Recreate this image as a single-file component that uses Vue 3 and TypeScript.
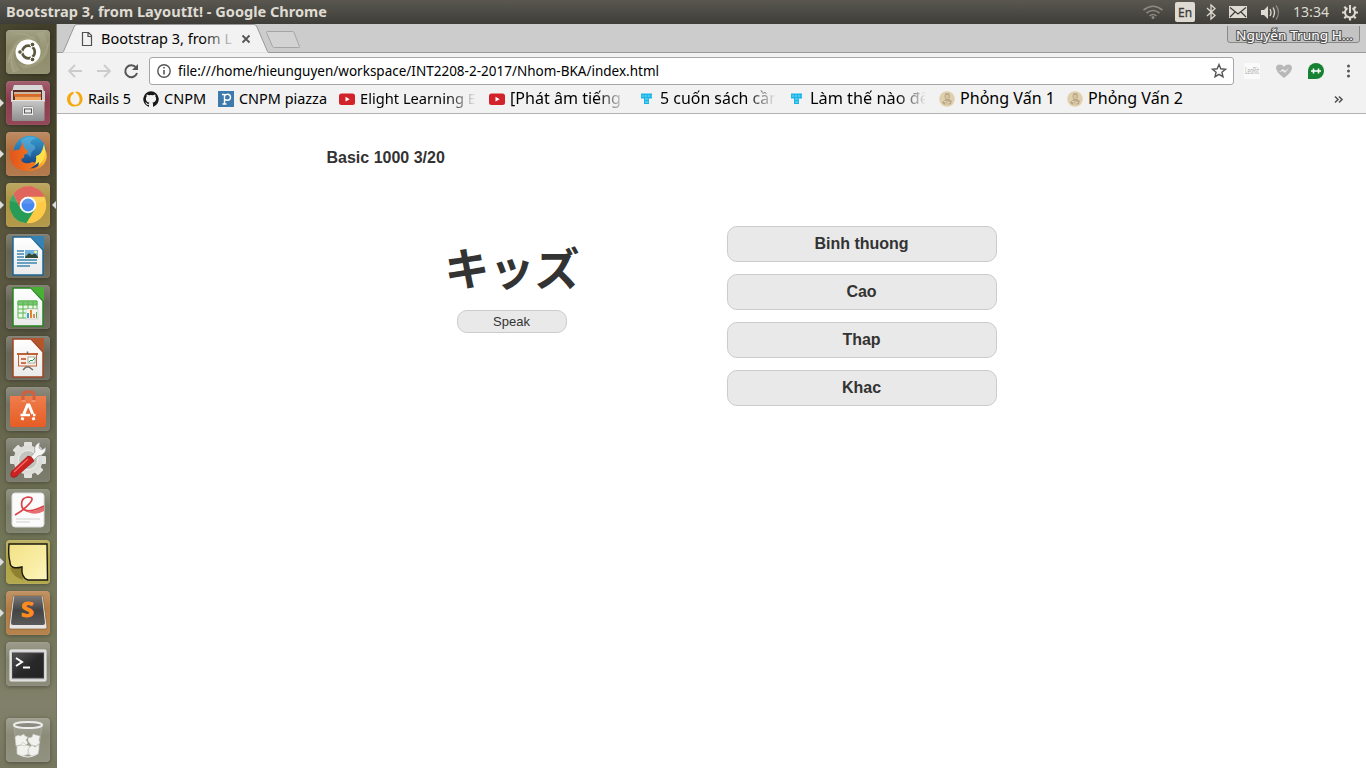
<script setup lang="ts">
interface Bookmark { icon: string; label: string; width: number; textWidth: number; size: number; fade?: boolean }
interface Tile { icon: string; bg: string; running?: boolean; active?: boolean }

const tiles: Tile[] = [
  { icon: 'dash', bg: '#8d8b69' },
  { icon: 'files', bg: '#8c3c4d', running: true },
  { icon: 'firefox', bg: '#ae7242', running: true },
  { icon: 'chrome', bg: '#ae9340', running: true, active: true },
  { icon: 'writer', bg: '#656353' },
  { icon: 'calc', bg: '#656353' },
  { icon: 'impress', bg: '#676556' },
  { icon: 'software', bg: '#737262' },
  { icon: 'settings', bg: '#747565' },
  { icon: 'reader', bg: '#797c66' },
  { icon: 'notes', bg: '#b0a344', running: true },
  { icon: 'sublime', bg: '#b27b42', running: true },
  { icon: 'terminal', bg: '#858572' },
  { icon: 'trash', bg: '#8b8b78' }
]

const bookmarks: Bookmark[] = [
  { icon: 'rails', label: 'Rails 5', width: 76, textWidth: 43, size: 14 },
  { icon: 'github', label: 'CNPM', width: 75, textWidth: 42, size: 14 },
  { icon: 'piazza', label: 'CNPM piazza', width: 121, textWidth: 88, size: 14 },
  { icon: 'youtube', label: 'Elight Learning E', width: 150, textWidth: 116, size: 14, fade: true },
  { icon: 'youtube', label: '[Phát âm tiếng', width: 150, textWidth: 111, size: 16, fade: true },
  { icon: 'tt', label: '5 cuốn sách cần', width: 150, textWidth: 119, size: 16, fade: true },
  { icon: 'tt', label: 'Làm thế nào để', width: 150, textWidth: 119, size: 16, fade: true },
  { icon: 'face', label: 'Phỏng Vấn 1', width: 128, textWidth: 95, size: 16 },
  { icon: 'face', label: 'Phỏng Vấn 2', width: 128, textWidth: 95, size: 16 }
]

const answers: string[] = ['Binh thuong', 'Cao', 'Thap', 'Khac']
const teeth: number[] = [0, 45, 90, 135]
</script>

<template>
  <div class="desktop">
    <header class="panel">
      <svg class="panel-title" width="340" height="24"><text x="6" y="17" textLength="321" lengthAdjust="spacingAndGlyphs">Bootstrap 3, from LayoutIt! - Google Chrome</text></svg>
      <svg class="tray" width="226" height="24" viewBox="0 0 226 24">
        <g fill="none" stroke="#8b8880" stroke-width="1.6">
          <path d="M3.5 10 Q13 2.500 22.500 10M6.500 13 Q13 8 19.500 13M9.500 16 Q13 13 16.500 16" />
        </g>
        <circle cx="13" cy="17.500" r="1.500" fill="#8b8880" />
        <rect x="35" y="2" width="20" height="20" rx="2" fill="#dfdbd2" />
        <text x="38" y="17" font-size="13" textLength="14" lengthAdjust="spacingAndGlyphs" fill="#3c3b37" stroke="#3c3b37" stroke-width=".3">En</text>
        <path d="M67 8 75 15.500 71 19V5l4 3.500-8 7.500" fill="none" stroke="#dfdbd2" stroke-width="1.300" />
        <rect x="89" y="6" width="18" height="12" fill="#dfdbd2" />
        <path d="M90 7.500 98 14l8-6.500M90 17l5-5m11 5-5-5" fill="none" stroke="#3c3b37" stroke-width="1.200" />
        <path d="M121 10h3l4-4v13l-4-4h-3z" fill="#dfdbd2" />
        <path d="M130 9q2 3.500 0 7M133 7.500q3 5 0 10" fill="none" stroke="#dfdbd2" stroke-width="1.300" />
        <path d="M136 5.500q5 7 0 14" fill="none" stroke="#8b8880" stroke-width="1.300" />
        <text x="153" y="17" font-size="14" textLength="36" lengthAdjust="spacingAndGlyphs" fill="#dfdbd2">13:34</text>
        <g transform="translate(210 12.500)" stroke="#dfdbd2" fill="none">
          <path d="M-2.500-4.300A5 5 0 1 0 2.500-4.300" stroke-width="2" />
          <path d="M0-7.500v8" stroke-width="2" />
          <path d="M-4-4-5.700-5.700M4-4l1.700-1.700M-5 0h-3M5 0h3M-4 4-5.700 5.700M4 4l1.700 1.700M0 5v3" stroke-width="2.200" />
        </g>
      </svg>
    </header>

    <div class="workspace">
      <aside class="launcher">
        <div v-for="t in tiles" :key="t.icon" class="slot" :class="{ bottom: t.icon === 'trash' }">
          <i v-if="t.running" class="pip"></i>
          <div class="tile" :style="{ backgroundColor: t.bg }">
            <svg width="44" height="44" viewBox="0 0 44 44">
              <g v-if="t.icon === 'dash'">
                <g fill="#d5d3b8" opacity=".16"><path d="M1 34Q3 8 27 6l8 10Q24 4 12 15 4 24 1 34M7 43Q-4 18 16 8l-6 10q-5 12 4 22M43 10Q45 34 18 39l-8-7q14 8 24-3 7-9 9-19M38 2Q48 24 27 37l6-14q4-12-3-20M3 5Q22-3 37 18L26 8Q14 2 3 5" /></g>
                <path d="M2 33Q5 11 26 9M8 42Q0 20 17 10M42 12Q41 33 19 35" fill="none" stroke="#c8c6aa" opacity=".3" />
                <circle cx="22" cy="22" r="12.500" fill="#fff" />
                <circle cx="22.500" cy="22" r="6.300" fill="none" stroke="#5b583f" stroke-width="2.700" />
                <path d="M22.500 22h-9M22.500 22l5-8M22.500 22l5 8" stroke="#fff" stroke-width="1.300" />
                <g fill="#5b583f" stroke="#fff"><circle cx="14" cy="22" r="2.300" /><circle cx="26.500" cy="14.500" r="2.300" /><circle cx="26.500" cy="29.500" r="2.300" /></g>
              </g>
              <g v-else-if="t.icon === 'files'">
                <path d="M8 4h28l3 10H5z" fill="#d8d8d6" />
                <path d="M5 10h34v11H5z" fill="#cfcfcf" /><path d="M7 9h29v12H7z" fill="#5a2c24" />
                <path d="M8 11h27v2H8z" fill="#cdb7a1" /><path d="M8 13h27v2.500H8z" fill="#d96a25" /><path d="M9 15.500h26V20H9z" fill="#f3a65b" />
                <path d="M6 19h32.500v20q0 1-1 1H7q-1 0-1-1z" fill="url(#steel)" /><path d="M6 19.500h32.500" stroke="#e8e8e8" />
                <rect x="16.500" y="25.500" width="11" height="9" rx="1" fill="#eee" stroke="#999" /><rect x="18.500" y="28" width="7" height="4" fill="#e8e8e8" stroke="#555" />
              </g>
              <g v-else-if="t.icon === 'firefox'">
                <circle cx="24" cy="20" r="16.300" fill="url(#globe)" />
                <path d="M15 8q8-6 16-1-8 0-6 5 5 1 4 5-5 3-4 8-7-4-9-9z" fill="#6fc2e6" opacity=".45" />
                <path d="M38 12q5 17-6 22 1-2 1-4l-5 4q3-6 2-10 6-1 8-12" fill="#ffe04a" />
                <path d="M6 13v7q3-3 7-2l4-8q0 5 2 7l3 2q0 2-4 4 1 4-2 3-2 4 3 5 4 1 7-1 5 0 3 3-5 5-9 4 9 2 14-5 6-5 5-15 4 8-1 15-7 8-17 7C5 38 2 26 5 17z" fill="url(#fox)" />
              </g>
              <g v-else-if="t.icon === 'chrome'">
                <circle cx="22" cy="22" r="18.300" fill="#fdca45" />
                <path d="M14.900 26.100 7.200 11A18.300 18.300 0 0 0 20.300 40.200l8.800-14.100z" fill="#289c57" />
                <path d="M7.200 11A18.300 18.300 0 0 1 38.700 13.800H22a8.200 8.200 0 0 0-7.100 12.300z" fill="#dc5147" />
                <circle cx="22" cy="22" r="8.300" fill="#fff" /><circle cx="22" cy="22" r="6.500" fill="#4688ef" />
                <path d="M4 18A18.300 18.300 0 0 1 40 18Q22 24 4 18" fill="#fff" opacity=".12" />
              </g>
              <g v-else-if="t.icon === 'writer'">
                <path d="M7 3h18l12 13v25H7z" fill="url(#paper)" stroke="#1d6694" stroke-width="1.500" /><path d="M24 2h14v14z" fill="#3583b5" />
                <path d="M11 17h7m-7 3h7m-7 3h7m-7 3h20m-20 3h20m-20 3h13" stroke="#3c86b4" stroke-width="1.300" />
                <rect x="19" y="16" width="13" height="8" fill="#6db3dd" /><path d="m19 23 4-4 3 2 3-2 3 4v1H19z" fill="#354834" /><circle cx="29.500" cy="18" r="1.500" fill="#fff29a" />
              </g>
              <g v-else-if="t.icon === 'calc'">
                <path d="M7 3h18l12 13v25H7z" fill="url(#paper)" stroke="#238521" stroke-width="1.500" /><path d="M24 2h14v14z" fill="#49af35" />
                <path d="M12 16h19v17H12z" fill="#edf9e8" stroke="#5ab651" /><path d="M12 16h19v4H12zM12 24h19m-19 4h19m-14-12v17m5-17v17m5-17v17" fill="#79c574" stroke="#5ab651" />
                <rect x="20" y="24" width="12" height="10" fill="#f5f5ed" stroke="#bbb" stroke-width=".5" /><path d="M21 28h2v5h-2z" fill="#3da0d3" /><path d="M24 25h2v8h-2z" fill="#e58427" /><path d="M27 29h2v4h-2z" fill="#df8c64" /><path d="M30 27h1v6h-1z" fill="#5ab651" />
              </g>
              <g v-else-if="t.icon === 'impress'">
                <path d="M7 3h18l12 13v25H7z" fill="url(#paper)" stroke="#a04422" stroke-width="1.500" /><path d="M24 2h14v14z" fill="#b4552c" />
                <rect x="12.500" y="18" width="18" height="12" fill="#fbeee7" stroke="#c06138" /><path d="M11 18h21" stroke="#c06138" stroke-width="2" /><path d="M21.500 15.500V18M17 34l3-3h3l4 3" stroke="#71675c" stroke-width="1.500" fill="none" />
                <path d="M15 22h5v2h-5zm0 4h5v2h-5z" fill="#c77252" /><rect x="22" y="21" width="7" height="6" fill="#fff" stroke="#77907a" stroke-width=".7" /><path d="m23 26 2-2 1 1 3-3" stroke="#239950" fill="none" />
              </g>
              <g v-else-if="t.icon === 'software'">
                <path d="M4 9h36v29q0 2-2 2H6q-2 0-2-2z" fill="url(#orange)" />
                <path d="M17 14V8q0-3 3-3h5q3 0 3 3v6" fill="none" stroke="#cf6040" stroke-width="3" />
                <path d="M15.500 14h4m6 0h4" stroke="#f2946e" stroke-width="2" />
                <path d="m17.800 27 3.700-9h1.500l3.700 9M16 33l1-2.500m11 2.500-1-2.500" fill="none" stroke="#fff" stroke-width="3" /><path d="M14.500 28h9.500m3 0h2.500" stroke="#fff" stroke-width="2.400" />
              </g>
              <g v-else-if="t.icon === 'settings'">
                <g fill="#e2e2df"><rect v-for="a in teeth" :key="a" x="18" y="4" width="8" height="36" rx="1" :transform="`rotate(${a} 22 22)`" /></g>
                <circle cx="22" cy="22" r="14.500" fill="#dddeda" /><circle cx="22" cy="22" r="9.500" fill="#c2c4bd" stroke="#eee" />
                <path d="m23 21 6-7q-2-7 5-10l-1 6 3 2 4-3q0 8-8 9l-6 6z" fill="#f5f5f3" stroke="#888" stroke-width=".6" />
                <path d="M22 18q4 0 6 5L11 38q-4 3-6 0-1-3 2-6z" fill="#ce2222" stroke="#891313" stroke-width=".6" /><path d="M22 21 8 34" stroke="#ef6b62" stroke-width="1.500" />
              </g>
              <g v-else-if="t.icon === 'reader'">
                <rect x="6" y="4" width="32" height="34" rx="3" fill="#fbfbfb" stroke="#ddd" />
                <path d="M9 26Q18 21 24 14q5-6-2-6-8 1-6 10 4 8 22-1" fill="none" stroke="#db4146" stroke-width="1.700" /><path d="M18 21q8 4 20-4v5q-10 6-20-1" fill="#e0555a" opacity=".85" />
                <path d="M10 30h24m-24 3h14" stroke="#cfcfcf" />
              </g>
              <g v-else-if="t.icon === 'notes'">
                <path d="m4 28 12-1 1 13Q7 37 4 28" fill="#8f8130" />
                <path d="M3 4h38l.5 36H22q-7-2-6-13-12 3-12-5Q2 15 3 4z" fill="url(#note)" stroke="#181811" stroke-width="1.400" />
              </g>
              <g v-else-if="t.icon === 'sublime'">
                <path d="M7 5h30l4 31q0 2-2 2H5q-2 0-2-2z" fill="#e7e5e3" stroke="#77512c" stroke-width=".6" /><path d="M9 5h26q1 0 1 1l3 26q0 2-2 2H7q-2 0-2-2L8 6q0-1 1-1z" fill="url(#keycap)" />
                <text x="15" y="26" font-size="21" font-weight="700" textLength="13" lengthAdjust="spacingAndGlyphs" fill="#ff8b1e" stroke="#ff8b1e" stroke-width=".8">S</text>
              </g>
              <g v-else-if="t.icon === 'terminal'">
                <rect x="4" y="8" width="36" height="31" rx="1" fill="#d4d2d2" stroke="#f0f0f0" /><rect x="6.500" y="11" width="31" height="25" fill="url(#screen)" stroke="#444" />
                <path d="m10 16 6 4-6 4M17 25.500h7" fill="none" stroke="#fff" stroke-width="2" />
              </g>
              <g v-else>
                <path d="m8 8 3 28q10 6 21 0l4-28z" fill="#b0b0a6" opacity=".35" stroke="#efefef" stroke-width=".6" />
                <g fill="#f1f1ee" stroke="#bbbcb4" stroke-width=".5"><path d="m9 19 3-2 2 1 4-2 1 2 3 1-2 3 2 3-3 3-5-1-4 1zM22 20l4-1 1-3 3 1 4 1-1 4 1 3-4 3-5-1-3-4zM11 28l4-1 2-3 3 3 4 1-2 4 1 4-6 2-6-2zM22 31l4-4 3 2 4-3v5l-1 5-6 2-4-2z" /></g>
                <path d="M12 36q10 6 19 0" fill="none" stroke="#e8e8e8" />
                <ellipse cx="22" cy="7" rx="14" ry="3" fill="#8b8b82" stroke="#ececec" stroke-width="2" />
              </g>
            </svg>
          </div>
          <i v-if="t.active" class="pip right"></i>
        </div>
      </aside>

      <main class="browser">
        <svg class="tabs" width="1309" height="29" viewBox="0 0 1309 29">
          <rect width="1309" height="29" fill="#ccc" />
          <path d="M0 28.500h5q1 0 1.500-1L17 3q1-2.500 3-2.500h177q2 0 3 2.500l10.500 24.500q.5 1 1.500 1h1097" fill="#f2f2f2" stroke="#999" />
          <path d="M209.500 8.500q0-1 1-1h25q1 0 1.500 1l5.500 14q.5 1-1 1h-24q-1.500 0-2-1z" fill="#d3d3d3" stroke="#a4a4a4" />
          <path d="M25.500 8.500h6l3 3v10h-9zM31 8.500v4h4" fill="none" stroke="#505050" stroke-width="1.200" />
          <text x="44" y="20" font-size="14" textLength="131" lengthAdjust="spacingAndGlyphs" fill="url(#fadeText)">Bootstrap 3, from L</text>
          <path d="m185.500 11.500 7 7m0-7-7 7" stroke="#555" stroke-width="1.800" />
          <path d="M1170.500 2v14q0 2.500 2.500 2.500h127q2.500 0 2.500-2.500V2" fill="#c3c3c3" stroke="#888" />
          <text x="1179" y="16" font-size="12" textLength="117" lengthAdjust="spacingAndGlyphs" fill="#fff" stroke="#555" stroke-width="2" paint-order="stroke">Nguyễn Trung H...</text>
        </svg>
        <div class="toolbar">
          <svg width="84" height="28" viewBox="0 0 84 28">
            <path d="M25 14H12m6-6-6 6 6 6M40 14h13m-6-6 6 6-6 6" fill="none" stroke="#ccc" stroke-width="1.800" />
            <path d="M79 10.500A6 6 0 1 0 80 16" fill="none" stroke="#555" stroke-width="2" /><path d="M81 7v6h-6z" fill="#555" />
          </svg>
          <div class="address">
            <svg width="500" height="26" viewBox="0 0 500 26">
              <circle cx="14" cy="13" r="6.200" fill="none" stroke="#555" stroke-width="1.400" /><path d="M14 12v4.500M14 9v1.500" stroke="#555" stroke-width="1.600" />
              <text x="28" y="18" font-size="14" textLength="481" lengthAdjust="spacingAndGlyphs">file:///home/hieunguyen/workspace/INT2208-2-2017/Nhom-BKA/index.html</text>
            </svg>
            <svg class="star" width="18" height="18" viewBox="0 0 18 18"><path d="m9 2.500 1.800 4.300 4.700.4-3.600 3 1.100 4.500-4-2.400-4 2.400 1.100-4.500-3.600-3 4.700-.4z" fill="none" stroke="#555" stroke-width="1.400" /></svg>
          </div>
          <svg width="132" height="28" viewBox="0 0 132 28">
            <rect x="10" y="6" width="16" height="16" fill="#fafafa" /><text x="11" y="17" font-size="8" textLength="14" lengthAdjust="spacingAndGlyphs" fill="#aaa">LeoRit</text>
            <path d="M50 21q-8-6-8-10c0-5 7-4 8-1 1-3 8-4 8 1q0 4-8 10" fill="#b8b8b8" /><path d="m45 15 4-3 2 2 4-3-4 5-2-2z" fill="#f2f2f2" />
            <path d="M74 14a8 8 0 1 1 8 8h-8z" fill="#178232" /><path d="M77 14h10m-7.500-2.500v5m5-5v5" stroke="#fff" stroke-width="1.600" />
            <g fill="#555"><circle cx="114.500" cy="9" r="1.500" /><circle cx="114.500" cy="14" r="1.500" /><circle cx="114.500" cy="19" r="1.500" /></g>
          </svg>
        </div>

        <nav class="bookmarks">
          <div v-for="b in bookmarks" :key="b.label" class="bookmark" :style="{ width: b.width + 'px' }">
            <svg width="16" height="16" viewBox="0 0 16 16">
              <g v-if="b.icon === 'rails'" fill="#f7a80b" fill-rule="evenodd"><path d="M6.500 .8C-2 2-2 14 6 15.500c12 1 12-13 4-15l-2 .8c6 2 6 12 1 12.500C2.500 14.500 1.500 5 6.500 3z" /></g>
              <path v-else-if="b.icon === 'github'" d="M8 .2a8 8 0 0 0-2.500 15.500c.4 0 .5-.2.500-.4v-1.500c-2.200.5-2.700-.9-2.700-.9-.4-.9-.9-1.200-.9-1.200-.7-.5.1-.5.1-.5.800.1 1.200.8 1.200.8.700 1.200 1.900.9 2.300.7.100-.5.300-.9.500-1.100-1.800-.2-3.600-.9-3.600-4 0-.9.300-1.600.8-2.100-.1-.2-.4-1 .1-2.100 0 0 .7-.2 2.200.8a7.600 7.600 0 0 1 4 0c1.500-1 2.200-.8 2.200-.8.400 1.100.2 1.900.1 2.100.5.500.8 1.200.8 2.100 0 3.100-1.900 3.800-3.700 4 .3.300.6.800.6 1.500v2.200c0 .2.100.5.500.4A8 8 0 0 0 8 .2" fill="#191717" />
              <g v-else-if="b.icon === 'piazza'"><rect width="16" height="16" fill="#3e7aab" /><path d="M4 3.500h2.500M6.500 3v10M4.500 13h4M6.500 4.500q1.500-1.500 3.500-1.300 2.500.5 2.500 3 0 3-3 3-2 0-3-1" fill="none" stroke="#fff" stroke-width="1.400" /></g>
              <g v-else-if="b.icon === 'youtube'"><rect y="2.500" width="16" height="11.500" rx="2.500" fill="#d3232a" /><path d="m6.500 5.800 4.200 2.400-4.200 2.400z" fill="#fff" /></g>
              <g v-else-if="b.icon === 'tt'"><path d="M2 2.500h11v5h-3V13H5V7.500H2z" fill="#19b5e9" /><path d="M3.500 5h1m2 0h1m2 0h1m1.500 0h.5M6.500 8h1m1 0h.7m-2.700 3h1m1 0h.7" stroke="#fff" stroke-width="1.200" /></g>
              <g v-else><circle cx="8" cy="8" r="7.800" fill="#dfcfac" /><path d="M5.500 5q0-3 2.800-3t2.700 3q0 2-1 3l3 2-1 3q-4 2-8 0l-1-2 3-2z" fill="#bba988" /><path d="M6.500 5h3.500M6.500 7h3M5 10.500l6 1M6 13h4" stroke="#eadcbc" stroke-width="1" fill="none" /></g>
            </svg>
            <svg :class="['label', { fade: b.fade }]" :width="b.fade ? 116 : b.textWidth + 2" height="24"><text x="0" y="17" :font-size="b.size" :textLength="b.textWidth" lengthAdjust="spacingAndGlyphs">{{ b.label }}</text></svg>
          </div>
          <svg class="more" width="10" height="10" viewBox="0 0 10 10"><path d="m1 1.500 3 3-3 3m4-6 3 3-3 3" fill="none" stroke="#555" stroke-width="1.600" /></svg>
        </nav>

        <section class="page">
          <div class="progress">Basic 1000 3/20</div>
          <div class="quiz">
            <div class="question">
              <div class="word">キッズ</div>
              <button class="speak">Speak</button>
            </div>
            <div class="answers"><button v-for="a in answers" :key="a">{{ a }}</button></div>
          </div>
        </section>
      </main>
    </div>

    <svg class="defs" width="0" height="0">
      <defs>
        <linearGradient id="steel" x2="0" y2="1"><stop stop-color="#c9c9c9" /><stop offset="1" stop-color="#8f8f8f" /></linearGradient>
        <linearGradient id="globe" x2="0" y2="1"><stop stop-color="#3aa0d2" /><stop offset="1" stop-color="#123a7c" /></linearGradient>
        <linearGradient id="fox" x2="1" y2="0"><stop stop-color="#e2551e" /><stop offset=".7" stop-color="#f17a1d" /><stop offset="1" stop-color="#ffd23a" /></linearGradient>
        <linearGradient id="paper" x2="0" y2="1"><stop stop-color="#fff" /><stop offset="1" stop-color="#eaeaea" /></linearGradient>
        <linearGradient id="orange" x2="0" y2="1"><stop stop-color="#ee7d4c" /><stop offset="1" stop-color="#e65c24" /></linearGradient>
        <linearGradient id="note" x2="1" y2="1"><stop stop-color="#f2e184" /><stop offset="1" stop-color="#fdf5bb" /></linearGradient>
        <linearGradient id="keycap" x2="0" y2="1"><stop stop-color="#777" /><stop offset=".5" stop-color="#444" /><stop offset="1" stop-color="#5a5a5a" /></linearGradient>
        <linearGradient id="screen" x2="1" y2="1"><stop stop-color="#555" /><stop offset=".5" stop-color="#292929" /><stop offset="1" stop-color="#222" /></linearGradient>
        <linearGradient id="fadeText" gradientUnits="userSpaceOnUse" x1="145" x2="178"><stop stop-color="#000" /><stop offset="1" stop-color="#000" stop-opacity=".05" /></linearGradient>
      </defs>
    </svg>
  </div>
</template>

<style>
body { margin: 0; overflow: hidden; }
</style>

<style scoped>
.desktop { width: 1366px; height: 768px; position: relative; font-family: "Noto Sans", "Open Sans", sans-serif; background: #fff; overflow: hidden; }
svg { display: block; flex: none; }
.defs { position: absolute; }
.panel { height: 24px; display: flex; justify-content: space-between; background: linear-gradient(#595750, #3e3d38); }
.panel-title { font-size: 14px; font-weight: 700; fill: #dfdbd2; }
.workspace { display: flex; height: 744px; }
.launcher { width: 57px; box-sizing: border-box; padding-top: 6px; display: flex; flex-direction: column; gap: 7px; border-right: 1px solid #77765f; background: radial-gradient(ellipse at 0 60px, #6a664640, transparent 50px), linear-gradient(#403d29 0, #48452f 130px, #59553f 230px, #555440 310px, #696a50 420px, #74785a 530px, #747659 610px, #81806a 680px, #77765e 744px); }
.slot { display: flex; align-items: center; height: 44px; padding-left: 6px; position: relative; }
.slot.bottom { margin-top: 25px; }
.tile { width: 44px; height: 44px; border-radius: 4px; background-image: linear-gradient(#ffffff30, #ffffff00 40%, #ffffff10); box-shadow: inset 0 0 1px #ffffff70, 0 1px 4px #0005; }
.pip { position: absolute; left: 0; top: 18px; border: 4px solid transparent; border-left-color: #ddd; border-right: 0; }
.pip.right { left: auto; right: 0; border-left: 0; border-right: 4px solid #ddd; }
.browser { width: 1309px; }
.toolbar { height: 33px; padding-top: 4px; box-sizing: border-box; display: flex; background: #f2f2f2; }
.toolbar > svg:first-child { margin-right: 8px; }
.address { width: 1085px; height: 28px; box-sizing: border-box; border: 1px solid #a6a6a6; border-radius: 3px; background: #fff; display: flex; justify-content: space-between; align-items: center; padding-right: 5px; }
.address svg { overflow: visible; }
.bookmarks { height: 28px; box-sizing: border-box; border-bottom: 1px solid #b3b3b3; background: #f2f2f2; display: flex; padding-left: 10px; }
.bookmark { display: flex; align-items: center; gap: 5px; height: 26px; flex: none; }
.fade { mask-image: linear-gradient(90deg, #000 75%, transparent); overflow: hidden; }
.more { margin: 9px 0 0 139px; }
.page { font-family: "Liberation Sans", Arial, sans-serif; color: #333; padding: 34px 0 0 270px; }
.progress { font-size: 16px; font-weight: 700; line-height: 20px; margin-left: -0.5px; }
.quiz { display: flex; align-items: flex-start; padding-top: 58px; }
.question { width: 370px; display: flex; flex-direction: column; align-items: center; margin-right: 30px; }
.word { font: 700 45px/64px "Noto Sans CJK JP", sans-serif; padding: 9px 0 1px; }
button { font-family: inherit; color: #333; border: 1px solid #ccc; background: #e9e9e9; padding: 0 1px 0 0; margin: 0; }
.speak { width: 110px; height: 23px; border-radius: 10px; font-size: 13px; margin-top: 10px; }
.answers { display: flex; flex-direction: column; gap: 12px; }
.answers button { width: 270px; height: 36px; border-radius: 10px; font-size: 16px; font-weight: 700; }
</style>
